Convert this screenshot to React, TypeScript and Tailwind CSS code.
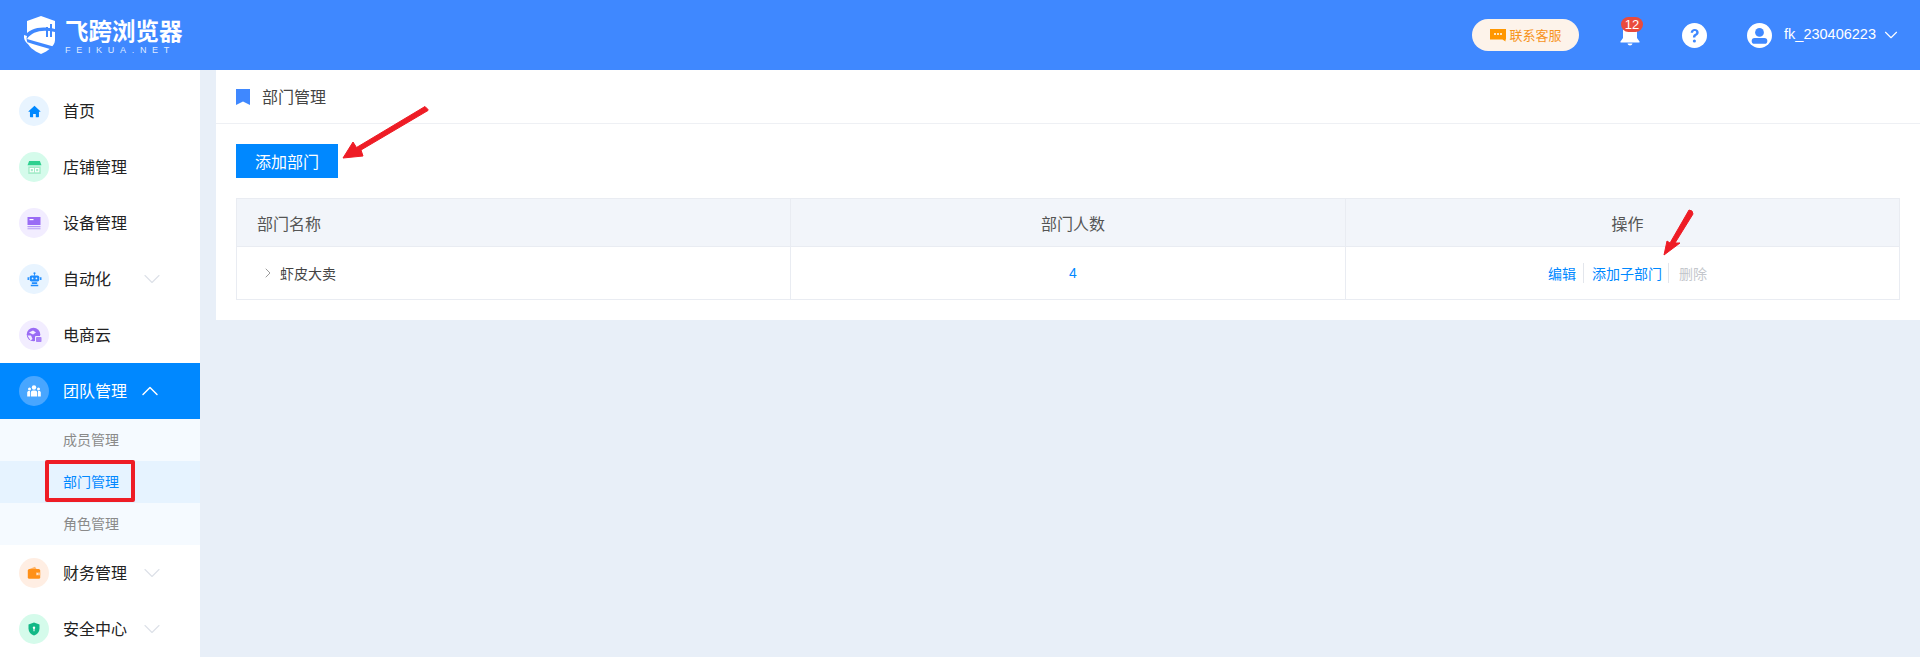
import React from "react";
import { ChevronDown, ChevronRight, ChevronUp } from "lucide-react";

const cjk = "font-['Microsoft_YaHei','Noto_Sans_CJK_SC','Liberation_Sans',sans-serif]";

type IconName = "home" | "shop" | "device" | "robot" | "cloud" | "team" | "wallet" | "shield";

const NavIcon = ({ name }: { name: IconName }) => {
  if (name === "home")
    return (
      <svg viewBox="0 0 14 14" className="w-[13px] h-[13px]" fill="#0088ff">
        <path d="M7 .8.6 6.600c-.3.3-.1.8.3.8h1.200v5c0 .4.3.7.7.7h2.700V9.600h2.900v3.500h2.700c.4 0 .7-.3.7-.7v-5h1.200c.4 0 .6-.5.3-.8L7 .8z" />
      </svg>
    );
  if (name === "shop")
    return (
      <svg viewBox="0 0 14 14" className="w-[15px] h-[15px]">
        <path d="M2 1h10l1.500 4H.5L2 1z" fill="#2fd08f" />
        <path d="M1.200 6h11.600v7H1.200z" fill="#a5ecc9" />
        <path d="M3 8h3v3H3zM8 8h3v3H8z" fill="none" stroke="#ffffff" strokeWidth="1" />
      </svg>
    );
  if (name === "device")
    return (
      <svg viewBox="0 0 14 14" className="w-[14px] h-[14px]">
        <path d="M.5 1h13v8H.5z" fill="#9a6cf5" />
        <path d="M2.500 3h4v1.200h-4z" fill="#ffffff" />
        <path d="M.5 10h13v1.200H.5zM.5 12.200h13v1H.5z" fill="#b79af8" />
      </svg>
    );
  if (name === "robot")
    return (
      <svg viewBox="0 0 14 14" className="w-[15px] h-[15px]" fill="#1e8cff">
        <circle cx="7" cy="1.200" r="1" />
        <path d="M6.600 1.500h.8v2h-.8z" />
        <rect x="2.500" y="3.200" width="9" height="5.600" rx="1.600" />
        <path d="M.5 5h1.300v2.500H.5zM12.200 5h1.300v2.500h-1.300z" />
        <path d="M4.500 9.500h5v1.800h-5zM3.500 12h7v1.200h-7z" />
        <circle cx="5.200" cy="6" r=".8" fill="#e8f3ff" />
        <circle cx="8.800" cy="6" r=".8" fill="#e8f3ff" />
      </svg>
    );
  if (name === "cloud")
    return (
      <svg viewBox="0 0 16 16" className="w-[16px] h-[16px]">
        <circle cx="7.500" cy="7.500" r="6.800" fill="#9a6cf5" />
        <path d="M3 5.500 7 3.500l3 2-3 2zM1.500 8.500l3.500 0 1.500 3.500-2 1.500z" fill="#f3eeff" />
        <rect x="9" y="9" width="6.500" height="6" rx="1" fill="#f3eeff" />
        <rect x="10" y="10" width="5.500" height="5" rx=".8" fill="#a981f7" />
      </svg>
    );
  if (name === "team")
    return (
      <svg viewBox="0 0 14 14" className="w-[14px] h-[14px]" fill="#ffffff">
        <circle cx="7" cy="3.500" r="2.200" />
        <circle cx="2.500" cy="5" r="1.500" />
        <circle cx="11.500" cy="5" r="1.500" />
        <path d="M3.800 12.500V8.500c0-1.200 1-2 2-2h2.400c1 0 2 .8 2 2v4z" />
        <path d="M.2 12.500V8.600c0-.9.7-1.600 1.500-1.600H3v5.500zM11 12.500V7h1.300c.8 0 1.500.7 1.500 1.600v3.900z" />
      </svg>
    );
  if (name === "wallet")
    return (
      <svg viewBox="0 0 14 14" className="w-[14px] h-[14px]">
        <path d="M2.500 3 8 .8 9.500 3z" fill="#ffb366" />
        <rect x=".8" y="3" width="12.400" height="9.800" rx="1.500" fill="#ff9018" />
        <rect x="9" y="6.500" width="4.200" height="2.800" fill="#ffc48a" />
        <circle cx="10.500" cy="7.900" r=".7" fill="#ffffff" />
      </svg>
    );
  return (
    <svg viewBox="0 0 14 14" className="w-[14px] h-[14px]">
      <path d="M7 .5 12.500 2.500v4.200c0 3.200-2.400 5.600-5.500 6.800-3.100-1.200-5.500-3.600-5.500-6.800V2.500z" fill="#12b886" />
      <circle cx="7" cy="5.800" r="1.200" fill="#ffffff" />
      <path d="M6.500 6.500h1v2.700h-1z" fill="#ffffff" />
    </svg>
  );
};

const navTop: { label: string; icon: IconName; circle: string; arrow?: boolean }[] = [
  { label: "首页", icon: "home", circle: "bg-[#e8f4ff]" },
  { label: "店铺管理", icon: "shop", circle: "bg-[#d5fbeb]" },
  { label: "设备管理", icon: "device", circle: "bg-[#f2edff]" },
  { label: "自动化", icon: "robot", circle: "bg-[#e8f4ff]", arrow: true },
  { label: "电商云", icon: "cloud", circle: "bg-[#f2edff]" },
];

const NavItem = ({ label, icon, circle, arrow }: { label: string; icon: IconName; circle: string; arrow?: boolean }) => (
  <div className="flex items-center h-14 pl-[19px]">
    <div className={`w-[30px] h-[30px] rounded-full flex items-center justify-center ${circle}`}>
      <NavIcon name={icon} />
    </div>
    <span className="ml-[14px] w-[75px] pb-[2px] text-base text-[#222222]">{label}</span>
    {arrow && <ChevronDown className="w-[28px] h-[28px] text-[#dde1e8]" strokeWidth={1} />}
  </div>
);

const Sidebar = () => (
  <aside className="w-[200px] shrink-0 bg-white pt-[13px] h-[587px] overflow-hidden">
    {navTop.map((item) => (
      <NavItem key={item.label} {...item} />
    ))}
    <div className="flex items-center h-14 pl-[19px] bg-[#0088ff]">
      <div className="w-[30px] h-[30px] rounded-full flex items-center justify-center bg-[#48a6ff]">
        <NavIcon name="team" />
      </div>
      <span className="ml-[14px] w-[73px] pb-[2px] text-base text-white">团队管理</span>
      <ChevronUp className="w-[28px] h-[28px] text-white" strokeWidth={1.25} />
    </div>
    <div className="bg-[#f5faff] text-sm">
      <div className="h-[42px] flex items-center pb-[2px] pl-[63px] text-[#8a8a8a]">成员管理</div>
      <div className="h-[42px] flex items-center pb-[2px] pl-[63px] text-[#0088ff] bg-[#e6f3ff]">部门管理</div>
      <div className="h-[42px] flex items-center pb-[2px] pl-[63px] text-[#8a8a8a]">角色管理</div>
    </div>
    <NavItem label="财务管理" icon="wallet" circle="bg-[#ffeee3]" arrow />
    <NavItem label="安全中心" icon="shield" circle="bg-[#d5fbeb]" arrow />
  </aside>
);

const Logo = () => (
  <div className="flex items-center pl-6">
    <svg viewBox="0 0 34 40" className="w-[34px] h-[40px]">
      <path d="M17 1 31 6v19c0 6-7 11-14 14C10 36 3 31 3 25V6z" fill="#ffffff" />
      <path d="M0 22C6 12 18 11 31 14v3C19 14 8 16 3 24zM3 27c7 3 18 5 26 8l2-3c-9-3-19-5-28-8z" fill="#3f88ff" />
      <path d="M0 20c-.5 4 1 7 5 10-2-3-3-6-2-9z" fill="#ffffff" />
      <path d="M22 12h2v10h-2zM26 9h2v13h-2z" fill="#3f88ff" />
    </svg>
    <div className="ml-[7px] flex flex-col text-white">
      <span className="text-[23.500px] leading-[28px] font-bold">飞跨浏览器</span>
      <span className="text-[9px] leading-[10px] tracking-[5.700px] mt-[1px] font-['Liberation_Sans',sans-serif] text-[#dfeaff]">FEIKUA.NET</span>
    </div>
  </div>
);

const Header = () => (
  <header className="h-[70px] bg-[#3f88ff] flex items-center justify-between">
    <Logo />
    <div className="flex items-center text-white">
      <div className="flex items-center justify-center w-[107px] h-8 rounded-full bg-[#fdf3ea] text-[13px] text-[#f7941d]">
        <svg viewBox="0 0 16 16" className="w-[16px] h-[16px] mr-[4px]">
          <path d="M0 2h16v10.500h-.5v2L12.500 12.500H0z" fill="#ff9700" />
          <circle cx="5" cy="7" r="1" fill="#ffffff" />
          <circle cx="8" cy="7" r="1" fill="#ffffff" />
          <circle cx="11" cy="7" r="1" fill="#ffffff" />
        </svg>
        联系客服
      </div>
      <div className="relative w-6 h-6 ml-[39px]">
        <svg viewBox="0 0 24 24" className="w-6 h-6" fill="#ffffff">
          <path d="M5 6.500C6 5 8.500 3 12 3s6 2 7 3.500V15l2.500 3.500c.3.500 0 1-.5 1H3c-.5 0-.8-.5-.5-1L5 15z" />
          <path d="M9.500 20.500h5c-.3 1.300-1.200 2-2.500 2s-2.200-.7-2.500-2z" />
        </svg>
        <span className="absolute left-[3px] top-[-6px] w-[22px] h-[15px] rounded-full bg-[#ea4b3d] text-white text-[13px] leading-[15px] text-center font-['Liberation_Sans',sans-serif]">12</span>
      </div>
      <svg viewBox="0 0 24 24" className="w-[25px] h-[25px] ml-[40px]">
        <circle cx="12" cy="12" r="12" fill="#ffffff" />
        <path d="M8.300 9.300c.2-2.200 1.800-3.500 3.900-3.500 2.200 0 3.800 1.300 3.800 3.200 0 1.500-.8 2.300-1.900 3-1 .6-1.300 1-1.300 2h-2.300c0-1.800.6-2.700 1.800-3.400.9-.6 1.300-1 1.300-1.600 0-.8-.6-1.300-1.400-1.300-.9 0-1.500.6-1.600 1.600z" fill="#3f88ff" />
        <circle cx="11.900" cy="17.300" r="1.500" fill="#3f88ff" />
      </svg>
      <svg viewBox="0 0 24 24" className="w-[25px] h-[25px] ml-[40px]">
        <circle cx="12" cy="12" r="12" fill="#ffffff" />
        <circle cx="12" cy="9" r="4.200" fill="#3f88ff" />
        <rect x="4.500" y="14.300" width="15" height="5.700" rx="2.800" fill="#3f88ff" />
      </svg>
      <span className="ml-[12px] text-[14.500px] font-['Liberation_Sans',sans-serif]">fk_230406223</span>
      <ChevronDown className="w-[22px] h-[22px] ml-[4px] mr-[18px] text-white" strokeWidth={1.25} />
    </div>
  </header>
);

const DeptTable = () => (
  <div className="mt-5 border border-[#e9ecf2] text-[#555555]">
    <div className="grid grid-cols-[554px_555px_1fr] h-[48px] bg-[#f2f5fa] border-b border-[#e9ecf2] text-base">
      <div className="flex items-center pl-5 border-r border-[#e9ecf2]">部门名称</div>
      <div className="flex items-center justify-center pl-[10px] border-r border-[#e9ecf2]">部门人数</div>
      <div className="flex items-center justify-center pl-[10px]">操作</div>
    </div>
    <div className="grid grid-cols-[554px_555px_1fr] h-[52px] text-sm">
      <div className="flex items-center pl-[23px] border-r border-[#e9ecf2] text-[#444444]">
        <ChevronRight className="w-[16px] h-[16px] text-[#888888]" strokeWidth={1.25} />
        <span className="ml-[4px]">虾皮大卖</span>
      </div>
      <div className="flex items-center justify-center pl-[10px] border-r border-[#e9ecf2] text-[#0088ff] text-sm font-['Liberation_Sans',sans-serif]">4</div>
      <div className="flex items-center justify-center pl-[10px]">
        <span className="text-[#0088ff] pr-[7px] border-r border-[#e3e6ec]">编辑</span>
        <span className="text-[#0088ff] pl-[8px] pr-[6px] border-r border-[#e3e6ec]">添加子部门</span>
        <span className="text-[#c4c7cc] pl-[10px]">删除</span>
      </div>
    </div>
  </div>
);

const Annotations = () => (
  <>
    <svg className="absolute left-0 top-0 w-[1920px] h-[657px] pointer-events-none" viewBox="0 0 1920 657" fill="#ee1c25">
      <path d="M425 106.500 428 109.500 428 110.500 361 150 363 156 343 158 353 142 356.500 147.500z" stroke="#ee1c25" strokeWidth="1" strokeLinejoin="round" />
      <path d="M1689 210 1692 211 1693 214 1675 243 1680 243 1664 255 1667 241 1670 243z" stroke="#ee1c25" strokeWidth="1" strokeLinejoin="round" />
    </svg>
    <div className="absolute left-[45px] top-[460px] w-[90px] h-[42px] border-4 border-[#ee1c25] rounded-[2px]" />
  </>
);

export default function App() {
  return (
    <div className={`relative w-[1920px] h-[657px] overflow-hidden bg-[#e8eff8] ${cjk}`}>
      <Header />
      <div className="flex">
        <Sidebar />
        <main className="flex-1 ml-4 self-start bg-white">
          <div className="h-[54px] flex items-center pl-5 border-b border-[#eef0f4] text-base text-[#444444]">
            <svg viewBox="0 0 14 16" className="w-[14px] h-[16px]">
              <path d="M0 0h14v16L7 12.500 0 16z" fill="#3f88ff" />
            </svg>
            <span className="ml-[12px] pb-[2px]">部门管理</span>
          </div>
          <div className="pt-5 px-5 pb-5">
            <button className="block w-[102px] h-[34px] bg-[#0088ff] text-white text-base">添加部门</button>
            <DeptTable />
          </div>
        </main>
      </div>
      <Annotations />
    </div>
  );
}
